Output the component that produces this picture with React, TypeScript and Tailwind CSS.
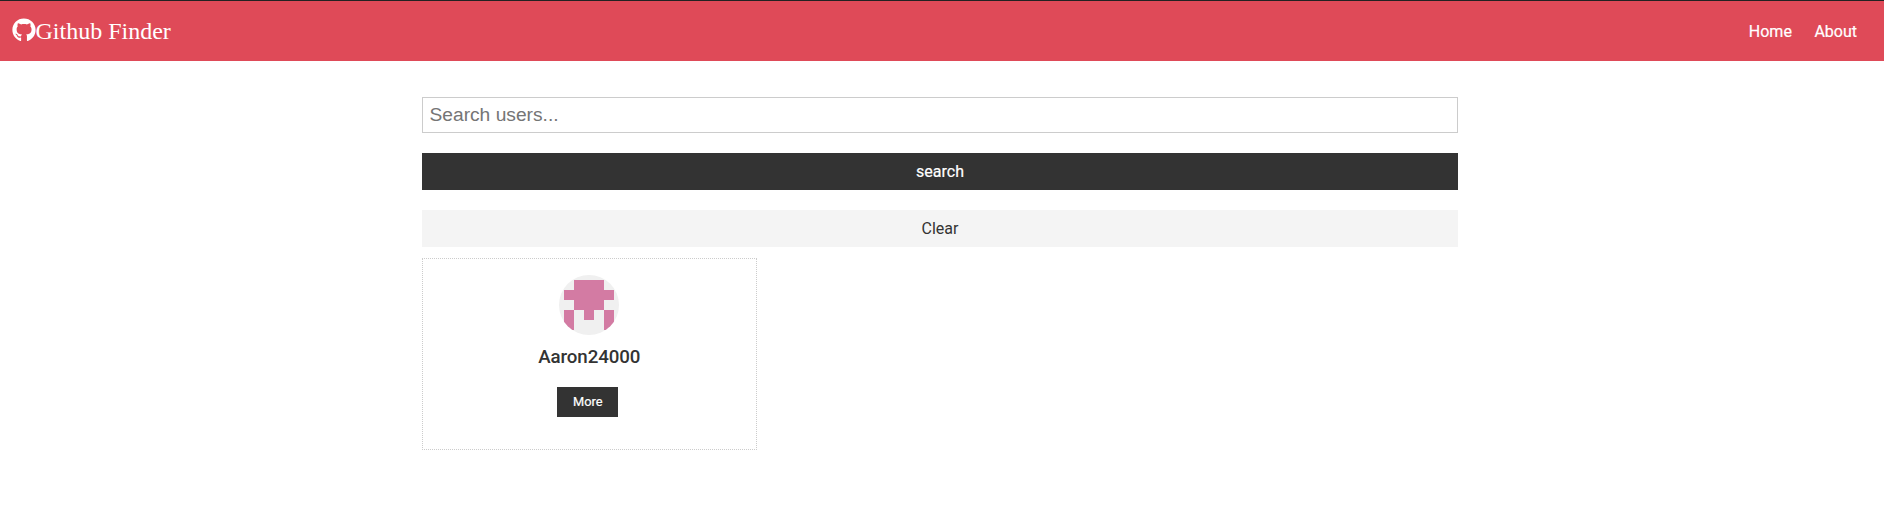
import React from "react";
import { FaGithub } from "react-icons/fa";

function Navbar() {
  return (
    <nav className="flex h-[61px] items-center justify-between border-t border-[#222] bg-[#df4a58] pl-[11.5px] pr-[27px] text-white">
      <h1 className="flex items-center font-['Liberation_Serif',serif] text-[24px] leading-[29px]">
        <FaGithub className="mb-[2px] size-6" />
        <span>Github Finder</span>
      </h1>
      <ul className="flex gap-[22.5px] pt-0.5 text-[16px] leading-[26px]">
        <li><a href="#home" className="[-webkit-text-stroke:0.2px]">Home</a></li>
        <li><a href="#about" className="[-webkit-text-stroke:0.2px]">About</a></li>
      </ul>
    </nav>
  );
}

function Avatar() {
  return (
    <svg viewBox="0 0 60 60" className="size-[60px] rounded-full bg-[#f0f0f0]" aria-hidden="true">
      <path
        fill="#d37ba3"
        d="M15 5h30v10h10v10H45v10H35v10H25V35H15V25H5V15h10zM5 35h10v20H5zM45 35h10v20H45z"
      />
    </svg>
  );
}

function UserCard({ login }: { login: string }) {
  return (
    <div className="flex h-48 flex-col items-center border border-dotted border-[#ccc] pt-4">
      <Avatar />
      <h3 className="mt-[7px] text-[18.72px] font-medium leading-[30px] tracking-[-0.1px]">{login}</h3>
      <a href="#profile" className="mr-[3px] mt-[15px] flex h-[30px] w-[61px] items-center justify-center bg-[#333] text-[12.8px] text-white [-webkit-text-stroke:0.2px]">
        More
      </a>
    </div>
  );
}

export default function App() {
  return (
    <div className="min-h-screen bg-white font-[Roboto,sans-serif] text-[#333]">
      <Navbar />
      <main className="ml-[422px] mt-9 w-[1036px]">
        <form className="flex flex-col gap-5">
          <input
            type="text"
            placeholder="Search users..."
            className="h-9 w-full border border-[#ccc] px-[6.5px] font-['Liberation_Sans',Arial,sans-serif] text-[19.2px] placeholder:text-[#757575]"
          />
          <button type="button" className="h-[37px] w-full bg-[#333] text-[16px] text-white [-webkit-text-stroke:0.2px]">search</button>
          <button type="button" className="h-[37px] w-full bg-[#f4f4f4] text-[16px] text-[#333]">Clear</button>
        </form>
        <div className="mt-[11px] grid grid-cols-3 gap-4">
          <UserCard login="Aaron24000" />
        </div>
      </main>
    </div>
  );
}
